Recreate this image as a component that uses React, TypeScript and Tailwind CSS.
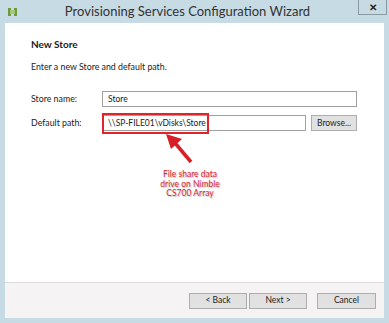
import React from "react";

const font = { fontFamily: 'Lato, "Open Sans", sans-serif' };

function Btn({ label, className = "" }: { label: string; className?: string }) {
  return (
    <div
      className={
        "flex h-[16px] items-center justify-center border border-[#adadad] bg-[#e1e1e1] text-[8.5px] text-[#222] " +
        className
      }
    >
      {label}
    </div>
  );
}

export default function App() {
  return (
    <div
      className="relative flex h-[323px] w-[389px] flex-col overflow-hidden bg-[#c7dbe4]"
      style={font}
    >
      {/* title bar */}
      <div className="flex h-[23px] items-start">
        <div className="ml-[8px] mt-[8px]">
          <svg width="9" height="8" viewBox="0 0 9 8">
            <rect x="0" y="0" width="9" height="8" fill="#6c9a3c" />
            <rect x="2" y="2" width="5" height="4" fill="#a6c77a" />
            <rect x="3" y="0" width="3" height="2" fill="#c7dbe4" />
            <rect x="3" y="6" width="3" height="2" fill="#c7dbe4" />
          </svg>
        </div>
        <div className="flex-1 pt-[2px] text-center text-[13px] text-[#333]">
          Provisioning Services Configuration Wizard
        </div>
        <div className="mr-[2px] flex h-[15px] w-[29px] items-center justify-center border border-t-0 border-[#8a9aa2] bg-[#c7dbe4] text-[10px] font-bold text-[#222]">
          ✕
        </div>
      </div>

      {/* body */}
      <div className="mx-[5px] flex flex-1 flex-col">
        <div className="relative flex h-[259px] flex-col bg-white pl-[26px] text-[#222]">
          <div className="mt-[14px] text-[10px] font-bold leading-[14px]">New Store</div>
          <div className="mt-[9px] text-[8.8px] leading-[14px]">Enter a new Store and default path.</div>

          <div className="mt-[17px] flex items-center">
            <div className="w-[71px] text-[8.8px]">Store name:</div>
            <div className="flex h-[16px] w-[255px] items-center border border-[#a0a0a0] pl-[5px] text-[8.5px]">
              Store
            </div>
          </div>

          <div className="mt-[8px] flex items-center">
            <div className="w-[71px] text-[8.8px]">Default path:</div>
            <div className="relative flex h-[16px] w-[204px] items-center border border-[#a0a0a0] pl-[5px] text-[8.5px]">
              \\SP-FILE01\vDisks\Store
              <div className="absolute left-[-1px] top-[-3px] h-[21px] w-[107px] border-2 border-[#e0242b]" />
            </div>
            <Btn label="Browse..." className="ml-[5px] w-[46px]" />
          </div>

          {/* annotation arrow */}
          <svg
            className="absolute left-[156px] top-[108px]"
            width="40"
            height="36"
            viewBox="0 0 40 36"
          >
            <line x1="30" y1="31" x2="14" y2="12" stroke="#d81e27" strokeWidth="3.5" />
            <polygon points="5,3 21,8 10,18" fill="#d81e27" />
          </svg>

          <div className="absolute left-[145px] top-[147px] w-[80px] text-center text-[8.5px] leading-[9.5px] text-[#d8232a] [text-shadow:1px_1px_1px_rgba(0,0,0,0.25)]">
            File share data
            <br />
            drive on Nimble
            <br />
            CS700 Array
          </div>
        </div>

        {/* footer */}
        <div className="flex h-[36px] items-center justify-end gap-[2px] border-t border-[#dcdcdc] bg-[#f6f3f4] pr-[8px]">
          <Btn label="< Back" className="w-[58px]" />
          <Btn label="Next >" className="w-[58px]" />
          <Btn label="Cancel" className="ml-[8px] w-[59px]" />
        </div>
      </div>
      <div className="h-[5px]" />
    </div>
  );
}
